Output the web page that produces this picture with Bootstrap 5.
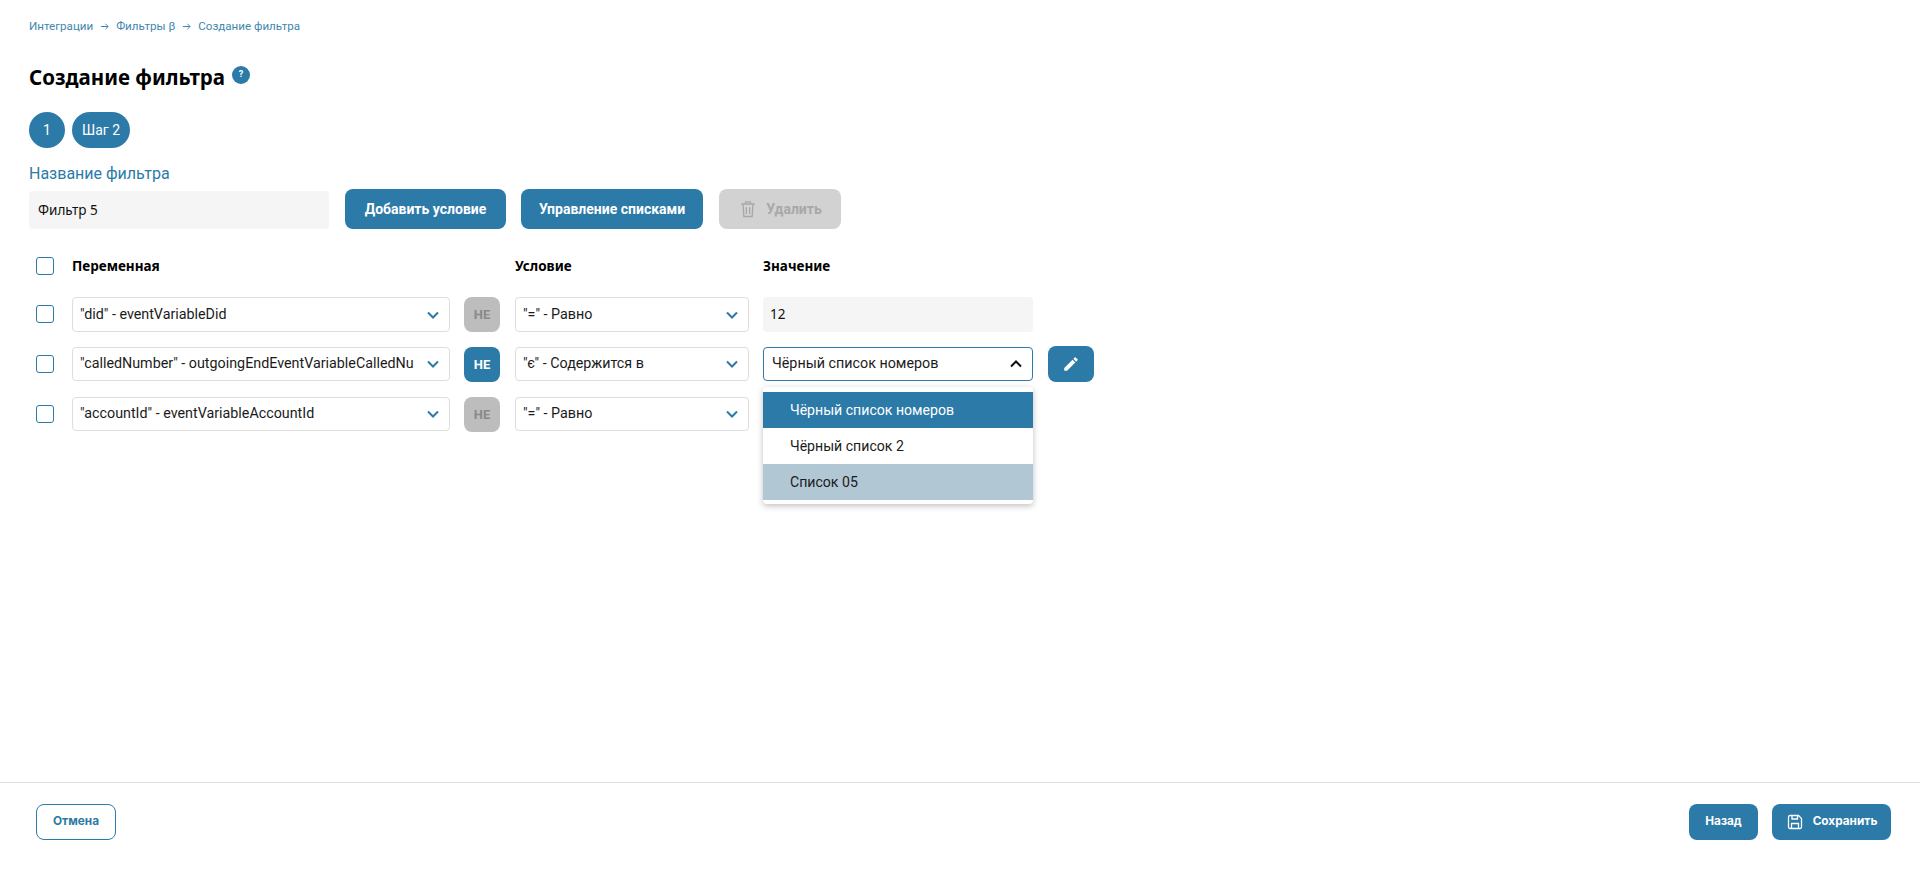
<!DOCTYPE html>
<html lang="ru">
<head>
<meta charset="utf-8">
<title>Создание фильтра</title>
<link href="https://cdn.jsdelivr.net/npm/bootstrap@5.3.0/dist/css/bootstrap.min.css" rel="stylesheet">
<style>
:root{--brand:#2b7aa8;}
html,body{height:100%;}
body{font-family:Roboto,"Liberation Sans",sans-serif;background:#fff;color:#111;font-size:14px;}
.shell{height:876px;}
.workarea{padding:18px 29px 0;}
.crumbs{font-size:11.6px;color:var(--brand);line-height:16px;height:16px;gap:7px;opacity:.9;}
.crumbs svg{width:9px;height:9px;}
.heading{font-family:"Noto Sans",sans-serif;font-weight:700;font-size:20.5px;line-height:28px;margin:29px 0 0;color:#000;}
.hint{width:18px;height:18px;background:var(--brand);color:#fff;font-size:9px;font-weight:700;margin-left:7px;margin-top:25px;}
.stepper{margin-top:21px;gap:7px;}
.stepchip{height:36px;min-width:36px;border-radius:18px;background:var(--brand);color:#fff;font-size:14px;padding:0 10px;}
.fieldlabel{color:var(--brand);font-size:16px;line-height:20px;margin-top:16px;}
.namerow{margin-top:5px;height:40px;align-items:flex-end;}
.softinput{background:#f5f5f5;border-radius:4px;font-family:"Noto Sans",sans-serif;font-size:13.5px;color:#111;padding:0 9px;}
.softinput.nameinput{width:300px;height:38px;}
.softinput.valinput{height:35px;padding:0 7px;}
.brandbtn{background:var(--brand);color:#fff;border:0;border-radius:8px;font-weight:700;font-size:14px;height:40px;padding:0;}
.brandbtn:hover{background:var(--brand);color:#fff;}
.w-add{width:161px;margin-left:16px;}
.w-lists{width:182px;margin-left:15px;}
.w-del,.w-del:disabled{width:122px;margin-left:16px;background:#d2d2d2;color:#a8a8a8;gap:8px;opacity:1;}
.w-del svg{width:20px;height:20px;}
.gridhead{margin-top:27px;height:19px;font-family:"Noto Sans",sans-serif;font-weight:700;font-size:13.5px;color:#000;}
.gridhead .headtext{padding-top:1px;}
.gridrow{height:35px;margin-top:15px;}
.gridrow.firstrow{margin-top:22px;}
.cbox{width:43px;padding-left:7px;flex:none;}
.gridrow .cbox{padding-top:8px;}
.cbox .form-check-input{width:18px;height:18px;margin:0;border:1px solid var(--brand);border-radius:3px;display:block;}
.c-var{width:378px;flex:none;}
.c-ne{width:36px;flex:none;margin-left:14px;}
.c-cond{width:234px;flex:none;margin-left:15px;}
.c-val{width:270px;flex:none;margin-left:14px;position:relative;}
.c-edit{width:46px;flex:none;margin-left:15px;margin-top:-1px;}
.pick{height:34px;border:1px solid #dedede;border-radius:4px;background:#fff;padding:0 8px 0 7px;font-size:14.3px;color:#1b1b1b;white-space:nowrap;}
.firstrow .pick{height:35px;}
.pick .picktext{flex:1 1 auto;min-width:0;}
.pick svg{width:12px;height:8px;flex:none;margin-left:9px;margin-right:2px;}
.pick.opened{border-color:var(--brand);padding-left:8px;}
.notbtn{width:36px;height:35px;border-radius:8px;font-weight:700;font-size:13px;background:#bdbdbd;color:#8a8a8a;}
.notbtn.active-not{background:var(--brand);color:#fff;}
.editbtn{width:46px;height:36px;}
.editbtn svg{width:18px;height:18px;}
.optmenu{position:absolute;top:40px;left:0;right:0;background:#fff;border-radius:4px;padding:5px 0 4px;box-shadow:0 2px 6px rgba(0,0,0,.25);z-index:5;}
.optitem{height:36px;padding:2px 0 0 27px;font-size:14.1px;color:#1b1b1b;}
.optitem.cur{background:var(--brand);color:#fff;}
.optitem.hov{background:#b2c7d4;}
.bottombar{border-top:1px solid #e0e0e0;height:94px;padding:21px 29px 0 36px;}
.footbtn{height:36px;font-size:11.8px;font-weight:700;border-radius:8px;font-family:Inter,Roboto,sans-serif;}
.w-cancel{width:80px;background:#fff;border:1px solid var(--brand);color:var(--brand);padding:0;}
.w-cancel:hover{background:#fff;color:var(--brand);}
.w-back{width:69px;}
.w-save{width:119px;margin-left:14px;gap:10px;padding-left:1px;}
.w-save svg{width:16px;height:16px;}
</style>
</head>
<body>
<div class="shell d-flex flex-column">
  <main class="workarea flex-grow-1">
    <nav class="crumbs d-flex align-items-center">
      <span>Интеграции</span>
      <svg viewBox="0 0 10 10" fill="none" stroke="currentColor" stroke-width="1.1"><path d="M1 5h8M6 2l3 3-3 3"/></svg>
      <span>Фильтры β</span>
      <svg viewBox="0 0 10 10" fill="none" stroke="currentColor" stroke-width="1.1"><path d="M1 5h8M6 2l3 3-3 3"/></svg>
      <span>Создание фильтра</span>
    </nav>
    <div class="d-flex align-items-center">
      <h1 class="heading">Создание фильтра</h1>
      <span class="hint rounded-circle d-inline-flex align-items-center justify-content-center">?</span>
    </div>
    <div class="stepper d-flex">
      <span class="stepchip d-flex align-items-center justify-content-center">1</span>
      <span class="stepchip d-flex align-items-center justify-content-center">Шаг 2</span>
    </div>
    <div class="fieldlabel">Название фильтра</div>
    <div class="namerow d-flex">
      <div class="softinput nameinput d-flex align-items-center">Фильтр 5</div>
      <button type="button" class="btn brandbtn w-add">Добавить условие</button>
      <button type="button" class="btn brandbtn w-lists">Управление списками</button>
      <button type="button" class="btn brandbtn w-del d-flex align-items-center justify-content-center" disabled>
        <svg viewBox="0 0 24 24" fill="none" stroke="currentColor" stroke-width="1.6"><path d="M4 6h16M9 6V3.5h6V6M6 6l1 15h10l1-15M10 10v8M14 10v8"/></svg>
        <span>Удалить</span>
      </button>
    </div>
    <div class="gridhead d-flex align-items-center">
      <div class="cbox"><input class="form-check-input" type="checkbox" aria-label="Выбрать все"></div>
      <div class="c-var headtext">Переменная</div>
      <div class="c-ne"></div>
      <div class="c-cond headtext">Условие</div>
      <div class="c-val headtext">Значение</div>
    </div>

    <div class="gridrow firstrow d-flex align-items-start">
      <div class="cbox"><input class="form-check-input" type="checkbox" aria-label="Строка 1"></div>
      <div class="c-var"><div class="pick d-flex align-items-center"><span class="picktext">"did" - eventVariableDid</span><svg viewBox="0 0 12 8" fill="none" stroke="#2b7aa8" stroke-width="2"><path d="M1 1.5l5 5 5-5"/></svg></div></div>
      <div class="c-ne"><div class="notbtn d-flex align-items-center justify-content-center">НЕ</div></div>
      <div class="c-cond"><div class="pick d-flex align-items-center"><span class="picktext">"=" - Равно</span><svg viewBox="0 0 12 8" fill="none" stroke="#2b7aa8" stroke-width="2"><path d="M1 1.5l5 5 5-5"/></svg></div></div>
      <div class="c-val"><div class="softinput valinput d-flex align-items-center">12</div></div>
    </div>

    <div class="gridrow d-flex align-items-start">
      <div class="cbox"><input class="form-check-input" type="checkbox" aria-label="Строка 2"></div>
      <div class="c-var"><div class="pick d-flex align-items-center"><span class="picktext">"calledNumber" - outgoingEndEventVariableCalledNu</span><svg viewBox="0 0 12 8" fill="none" stroke="#2b7aa8" stroke-width="2"><path d="M1 1.5l5 5 5-5"/></svg></div></div>
      <div class="c-ne"><div class="notbtn active-not d-flex align-items-center justify-content-center">НЕ</div></div>
      <div class="c-cond"><div class="pick d-flex align-items-center"><span class="picktext">"є" - Содержится в</span><svg viewBox="0 0 12 8" fill="none" stroke="#2b7aa8" stroke-width="2"><path d="M1 1.5l5 5 5-5"/></svg></div></div>
      <div class="c-val">
        <div class="pick opened d-flex align-items-center"><span class="picktext">Чёрный список номеров</span><svg viewBox="0 0 12 8" fill="none" stroke="#111" stroke-width="2"><path d="M1 6.5l5-5 5 5"/></svg></div>
        <div class="optmenu">
          <div class="optitem cur d-flex align-items-center">Чёрный список номеров</div>
          <div class="optitem d-flex align-items-center">Чёрный список 2</div>
          <div class="optitem hov d-flex align-items-center">Список 05</div>
        </div>
      </div>
      <div class="c-edit"><button type="button" class="btn brandbtn editbtn d-flex align-items-center justify-content-center" aria-label="Редактировать"><svg viewBox="0 0 24 24" fill="#fff"><path d="M3 17.25V21h3.75L17.8 9.94l-3.75-3.75L3 17.25zM20.7 7.04a1 1 0 0 0 0-1.41l-2.34-2.34a1 1 0 0 0-1.41 0l-1.83 1.83 3.75 3.75 1.83-1.83z"/></svg></button></div>
    </div>

    <div class="gridrow d-flex align-items-start">
      <div class="cbox"><input class="form-check-input" type="checkbox" aria-label="Строка 3"></div>
      <div class="c-var"><div class="pick d-flex align-items-center"><span class="picktext">"accountId" - eventVariableAccountId</span><svg viewBox="0 0 12 8" fill="none" stroke="#2b7aa8" stroke-width="2"><path d="M1 1.5l5 5 5-5"/></svg></div></div>
      <div class="c-ne"><div class="notbtn d-flex align-items-center justify-content-center">НЕ</div></div>
      <div class="c-cond"><div class="pick d-flex align-items-center"><span class="picktext">"=" - Равно</span><svg viewBox="0 0 12 8" fill="none" stroke="#2b7aa8" stroke-width="2"><path d="M1 1.5l5 5 5-5"/></svg></div></div>
    </div>
  </main>
  <footer class="bottombar d-flex justify-content-between align-items-start">
    <button type="button" class="btn footbtn w-cancel">Отмена</button>
    <div class="d-flex">
      <button type="button" class="btn brandbtn footbtn w-back">Назад</button>
      <button type="button" class="btn brandbtn footbtn w-save d-flex align-items-center justify-content-center">
        <svg viewBox="0 0 16 16" fill="none" stroke="#fff" stroke-width="1.3"><path d="M1.5 3A1.5 1.5 0 0 1 3 1.5h8.5l3 3V13a1.5 1.5 0 0 1-1.5 1.5H3A1.5 1.5 0 0 1 1.5 13zM5 1.5v3.5h5.5V1.5M4.5 14.5V9.5h7v5"/></svg>
        <span>Сохранить</span>
      </button>
    </div>
  </footer>
</div>
<script src="https://cdn.jsdelivr.net/npm/bootstrap@5.3.0/dist/js/bootstrap.bundle.min.js"></script>
</body>
</html>
